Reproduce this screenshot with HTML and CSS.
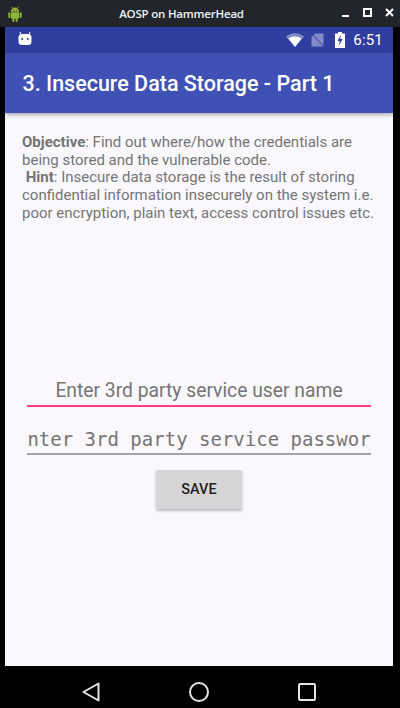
FILE: index.html
```html
<!DOCTYPE html>
<html lang="en">
<head>
<meta charset="utf-8">
<title>AOSP on HammerHead</title>
<link rel="stylesheet" href="styles.css">
</head>
<body>
<div class="emulator">
  <header class="titlebar">
    <svg class="android-logo" width="14" height="16" viewBox="0 0 16 18">
      <path class="a-green" d="M3.200 6.400a4.800 4.800 0 0 1 9.600 0z"/>
      <path class="a-stroke" d="M5 2.400 4 .8M11 2.400l1-1.600"/>
      <rect class="a-green" x="3.200" y="7" width="9.600" height="7.400" rx="1"/>
      <rect class="a-green" x="0.400" y="7" width="2.200" height="6.600" rx="1.100"/>
      <rect class="a-green" x="13.400" y="7" width="2.200" height="6.600" rx="1.100"/>
      <rect class="a-green" x="5" y="13" width="2.300" height="5" rx="1.100"/>
      <rect class="a-green" x="8.700" y="13" width="2.300" height="5" rx="1.100"/>
      <circle class="a-eye" cx="6" cy="4.400" r=".6"/>
      <circle class="a-eye" cx="10" cy="4.400" r=".6"/>
    </svg>
    <div class="window-title">AOSP on HammerHead</div>
    <div class="window-controls">
      <svg width="9" height="9" viewBox="0 0 9 9"><rect class="w-fill" x="1" y="7" width="7" height="2"/></svg>
      <svg width="9" height="9" viewBox="0 0 9 9"><path class="w-stroke" d="M1 1h7v7H1z"/></svg>
      <svg width="9" height="9" viewBox="0 0 9 9"><path class="w-stroke" d="M1 1l7 7M8 1l-7 7"/></svg>
    </div>
  </header>
  <div class="device">
    <main class="screen">
      <div class="statusbar">
        <svg class="notif" width="14" height="14" viewBox="0 0 14 14">
          <path class="s-stroke" d="M3 3 2 0M11 3l1-3"/>
          <rect class="s-fill" x="0.500" y="2" width="13" height="11" rx="3.500"/>
          <circle class="s-eye" cx="4.200" cy="7" r="1"/>
          <circle class="s-eye" cx="9.800" cy="7" r="1"/>
        </svg>
        <div class="status-right">
          <svg class="wifi" width="18" height="14" viewBox="0 0 18 14"><path class="s-dim" d="M0 3.800C2.500 1.500 5.600.2 9 .2s6.500 1.300 9 3.600L9 14z"/><path class="s-fill" d="M2.500 5.600C4.300 4.200 6.500 3.400 9 3.400s4.700.8 6.500 2.200L9 14z"/></svg>
          <svg class="sim" width="13" height="14" viewBox="0 0 13 14"><path class="s-dim" d="M4 0.500h8.500v13H0.500V4z"/><path class="s-line" d="M1 0.500l11.500 13"/></svg>
          <svg class="battery" width="10" height="16" viewBox="0 0 10 16"><path class="s-fill" d="M3 0h4v1.500h3V16H0V1.500h3z"/><path class="s-bolt" d="M5.800 3 2.500 9h2.200l-.6 4.500L7.600 7H5.200z"/></svg>
          <span class="clock">6:51</span>
        </div>
      </div>
      <div class="appbar">3. Insecure Data Storage - Part 1</div>
      <section class="content">
        <p class="info"><b>Objective</b>: Find out where/how the credentials are being stored and the vulnerable code.<br>&nbsp;<b>Hint</b>: Insecure data storage is the result of storing confidential information insecurely on the system i.e. poor encryption, plain text, access control issues etc.</p>
        <form class="form">
          <div class="field field-focus"><span>Enter 3rd party service user name</span></div>
          <div class="field field-mono"><span>Enter 3rd party service password</span></div>
          <button type="button" class="save">SAVE</button>
        </form>
      </section>
    </main>
  </div>
  <nav class="navbar">
    <svg width="20" height="22" viewBox="0 0 20 22"><path class="n-stroke" d="M17.500 2.500v17L2.500 11z"/></svg>
    <svg width="22" height="22" viewBox="0 0 22 22"><circle class="n-stroke" cx="11" cy="11" r="9"/></svg>
    <svg width="20" height="22" viewBox="0 0 20 22"><rect class="n-stroke" x="2" y="3" width="16" height="16" rx="1"/></svg>
  </nav>
</div>
</body>
</html>
```
FILE: styles.css
```css
* { box-sizing: border-box; }
html, body { margin: 0; padding: 0; }
body { width: 400px; height: 708px; overflow: hidden; background: #000; font-family: Roboto, sans-serif; }
.emulator { display: flex; flex-direction: column; height: 708px; }

.titlebar { display: flex; align-items: center; height: 27px; background: #22262c; padding: 0 8px; flex: none; }
.android-logo { flex: none; }
.window-title { flex: 1; text-align: center; color: #eef1f5; font: 600 11.500px "Open Sans", sans-serif; letter-spacing: -0.2px; }
.window-controls { display: flex; gap: 13px; align-items: center; margin: 0 -2px 2px 0; }
.a-green { fill: #8fb43a; }
.a-stroke { stroke: #8fb43a; stroke-width: 1; fill: none; }
.a-eye { fill: #22262c; }
.w-fill { fill: #fff; }
.w-stroke { stroke: #fff; stroke-width: 2; fill: none; }

.device { flex: 1; padding: 0 7px 0 5px; display: flex; min-height: 0; }
.screen { flex: 1; display: flex; flex-direction: column; background: #faf8fc; min-width: 0; }

.statusbar { height: 26px; flex: none; background: #303f9f; display: flex; align-items: center; justify-content: space-between; padding: 0 10px 0 13px; }
.notif { margin-bottom: 2px; }
.status-right { display: flex; align-items: center; }
.sim { margin-left: 7px; }
.battery { margin-left: 11px; }
.s-fill { fill: #fff; }
.s-eye { fill: #303f9f; }
.s-stroke { stroke: #fff; stroke-width: 1; fill: none; }
.s-dim { fill: #fff; opacity: .4; }
.s-line { stroke: #303f9f; stroke-width: 1; fill: none; }
.s-bolt { fill: #303f9f; }
.clock { color: #fff; font-size: 15px; letter-spacing: .2px; margin-left: 8px; }

.appbar { height: 60px; flex: none; background: #3f51b5; color: #fff; font-size: 21.500px; font-weight: 500; line-height: 62px; padding-left: 17.500px; box-shadow: 0 2px 4px rgba(0, 0, 0, .3); position: relative; }

.content { flex: 1; padding: 21px 15px 0 17px; display: flex; flex-direction: column; }
.info { margin: 0; color: #757575; font-size: 15px; line-height: 17.700px; }
.info b { font-weight: 700; }

.form { display: flex; flex-direction: column; align-items: center; margin-top: 152px; padding: 0 7px 0 5px; }
.field { width: 100%; height: 32px; padding-top: 2px; display: flex; justify-content: center; align-items: center; overflow: hidden; white-space: nowrap; color: #757575; font-size: 19.300px; flex: none; }
.field span { flex: none; }
.field-focus { border-bottom: 2px solid #ff4081; }
.field-mono { margin-top: 16px; border-bottom: 2px solid #a5a3a7; font-family: "DejaVu Sans Mono", monospace; font-size: 19px; }
.save { margin-top: 15px; width: 86px; height: 39px; border: 0; border-radius: 2px; background: #d6d6d8; color: #1f1f1f; font: 500 14.500px Roboto, sans-serif; box-shadow: 0 2px 3px rgba(0, 0, 0, .25); }

.navbar { height: 42px; flex: none; background: #000; display: flex; justify-content: center; gap: 87px; align-items: center; padding: 10px 2px 0 0; }
.n-stroke { fill: none; stroke: #e4e4e4; stroke-width: 2; stroke-linejoin: round; }
```
